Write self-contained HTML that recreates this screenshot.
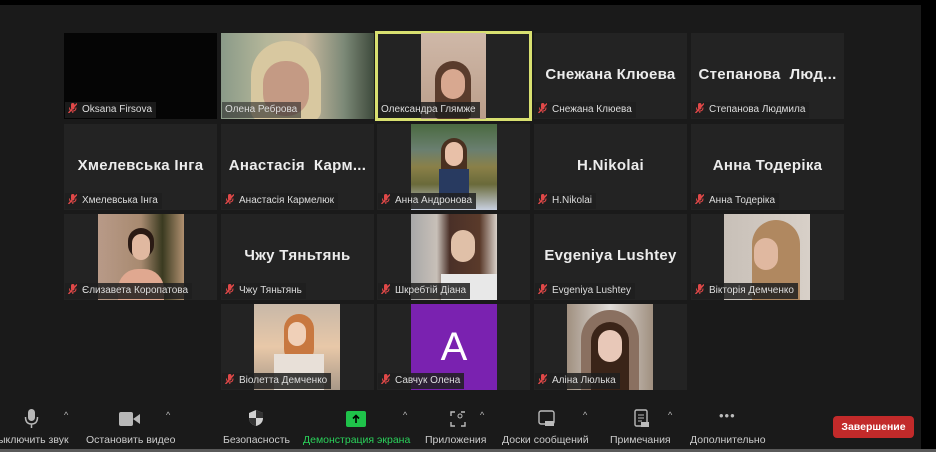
<!DOCTYPE html>
<html><head><meta charset="utf-8"><style>
*{margin:0;padding:0;box-sizing:border-box}
body{width:936px;height:452px;background:#000;overflow:hidden;position:relative;font-family:"Liberation Sans","DejaVu Sans",sans-serif}
#bg{position:absolute;left:0;top:5px;width:921px;height:445px;background:#1a1a1a}
#bl{position:absolute;left:0;top:449px;width:936px;height:3px;background:#5a5a5a}
.t{position:absolute;width:153px;height:86px;background:#232323;overflow:hidden}
.ph{position:absolute;top:0;height:86px}
.nm{position:absolute;left:0;right:0;top:33px;text-align:center;color:#ececec;font-weight:bold;font-size:15px;white-space:nowrap;letter-spacing:.3px}
.lb{position:absolute;left:1px;bottom:1px;height:16px;background:rgba(30,30,30,.85);color:#ddd;font-size:10px;line-height:16px;padding:0 4px 0 3px;white-space:nowrap}
.mu{display:inline-block;width:9px;height:10px;vertical-align:-1px;margin-right:5px}
.tb{position:absolute;color:#ccc;font-size:10.5px;top:434px;white-space:nowrap}
.ch{position:absolute;top:410px;color:#bbb;font-size:9px}
</style></head><body>
<div id="bg"></div><div id="bl"></div>
<svg width="0" height="0" style="position:absolute"><defs><g id="m"><rect x="3" y="0" width="3.5" height="6.5" rx="1.7" fill="#e04848"/><path d="M1.5 4.5 Q1.5 8 4.8 8 Q8 8 8 4.5 M4.8 8 V10" stroke="#e04848" fill="none" stroke-width="1"/><path d="M0.5 10 L9 0.5" stroke="#e04848" stroke-width="1.4"/></g></defs></svg>

<!-- Row 1 -->
<div class="t" style="left:64px;top:33px;background:#050505"><div class="lb"><svg class="mu"><use href="#m"/></svg>Oksana Firsova</div></div>
<div class="t" style="left:221px;top:33px;background:linear-gradient(90deg,#8a9a88 0%,#b5b79a 30%,#c9b99e 55%,#7d8a78 80%,#3e4a3c 100%)">
<div style="position:absolute;left:30px;top:8px;width:70px;height:80px;border-radius:35px 35px 10px 10px;background:#d8c8a0"></div>
<div style="position:absolute;left:42px;top:28px;width:46px;height:55px;border-radius:22px;background:#c49a84"></div>
<div class="lb" style="background:rgba(40,40,40,.6)">Олена Реброва</div></div>
<div class="t" style="left:377px;top:33px;height:86px;outline:3px solid #d8e070;outline-offset:-1px">
<div class="ph" style="left:44px;width:65px;background:linear-gradient(180deg,#cfb8a8,#bb9e8a)"><div style="position:absolute;left:14px;top:28px;width:36px;height:58px;border-radius:18px 18px 4px 4px;background:#5a3c2c"></div><div style="position:absolute;left:20px;top:36px;width:24px;height:30px;border-radius:12px;background:#d8a890"></div></div>
<div class="lb">Олександра Глямже</div></div>
<div class="t" style="left:534px;top:33px"><div class="nm">Снежана Клюева</div><div class="lb"><svg class="mu"><use href="#m"/></svg>Снежана Клюева</div></div>
<div class="t" style="left:691px;top:33px"><div class="nm">Степанова&nbsp; Люд...</div><div class="lb"><svg class="mu"><use href="#m"/></svg>Степанова Людмила</div></div>

<!-- Row 2 -->
<div class="t" style="left:64px;top:124px"><div class="nm">Хмелевська Інга</div><div class="lb"><svg class="mu"><use href="#m"/></svg>Хмелевська Інга</div></div>
<div class="t" style="left:221px;top:124px"><div class="nm">Анастасія&nbsp; Карм...</div><div class="lb"><svg class="mu"><use href="#m"/></svg>Анастасія Кармелюк</div></div>
<div class="t" style="left:377px;top:124px"><div class="ph" style="left:34px;width:86px;background:linear-gradient(180deg,#4a6a40 0%,#6a7f70 30%,#8a8048 50%,#6a6a3a 70%,#c8d0e0 100%)"><div style="position:absolute;left:30px;top:14px;width:26px;height:60px;border-radius:13px;background:#4a3020"></div><div style="position:absolute;left:34px;top:18px;width:18px;height:24px;border-radius:9px;background:#e8c0a8"></div><div style="position:absolute;left:28px;top:45px;width:30px;height:30px;background:#283a60"></div></div>
<div class="lb"><svg class="mu"><use href="#m"/></svg>Анна Андронова</div></div>
<div class="t" style="left:534px;top:124px"><div class="nm">H.Nikolai</div><div class="lb"><svg class="mu"><use href="#m"/></svg>H.Nikolai</div></div>
<div class="t" style="left:691px;top:124px"><div class="nm">Анна Тодеріка</div><div class="lb"><svg class="mu"><use href="#m"/></svg>Анна Тодеріка</div></div>

<!-- Row 3 -->
<div class="t" style="left:64px;top:214px"><div class="ph" style="left:34px;width:86px;background:linear-gradient(90deg,#b89a88 0%,#a88a70 50%,#3a3a20 75%,#b09070 100%)"><div style="position:absolute;left:30px;top:14px;width:26px;height:30px;border-radius:13px;background:#2a1a14"></div><div style="position:absolute;left:34px;top:20px;width:18px;height:26px;border-radius:9px;background:#e0b8a0"></div><div style="position:absolute;left:20px;top:55px;width:46px;height:32px;border-radius:20px 20px 0 0;background:#e0a890"></div></div>
<div class="lb"><svg class="mu"><use href="#m"/></svg>Єлизавета Коропатова</div></div>
<div class="t" style="left:221px;top:214px"><div class="nm">Чжу Тяньтянь</div><div class="lb"><svg class="mu"><use href="#m"/></svg>Чжу Тяньтянь</div></div>
<div class="t" style="left:377px;top:214px"><div class="ph" style="left:34px;width:86px;background:linear-gradient(90deg,#a8a8a8 0%,#c8c0b8 30%,#4a3028 45%,#5a3a2a 80%,#d8d0c8 100%)"><div style="position:absolute;left:40px;top:16px;width:24px;height:32px;border-radius:12px;background:#e0c0a8"></div><div style="position:absolute;left:30px;top:60px;width:56px;height:26px;background:#e8e8e8"></div></div>
<div class="lb"><svg class="mu"><use href="#m"/></svg>Шкребтій Діана</div></div>
<div class="t" style="left:534px;top:214px"><div class="nm">Evgeniya Lushtey</div><div class="lb"><svg class="mu"><use href="#m"/></svg>Evgeniya Lushtey</div></div>
<div class="t" style="left:691px;top:214px"><div class="ph" style="left:33px;width:86px;background:linear-gradient(90deg,#c8c0b8,#d8d0c8)"><div style="position:absolute;left:28px;top:6px;width:48px;height:80px;border-radius:24px 24px 0 0;background:#b08860"></div><div style="position:absolute;left:30px;top:24px;width:24px;height:32px;border-radius:12px;background:#e0b8a0"></div></div>
<div class="lb"><svg class="mu"><use href="#m"/></svg>Вікторія Демченко</div></div>

<!-- Row 4 -->
<div class="t" style="left:221px;top:304px"><div class="ph" style="left:33px;width:86px;background:linear-gradient(180deg,#c8b8a8 0%,#e8c8a8 50%,#a89888 100%)"><div style="position:absolute;left:30px;top:10px;width:30px;height:50px;border-radius:15px;background:#c87840"></div><div style="position:absolute;left:34px;top:18px;width:18px;height:24px;border-radius:9px;background:#f0d0b8"></div><div style="position:absolute;left:20px;top:50px;width:50px;height:36px;background:#e8e0d8"></div></div>
<div class="lb"><svg class="mu"><use href="#m"/></svg>Віолетта Демченко</div></div>
<div class="t" style="left:377px;top:304px"><div class="ph" style="left:34px;width:86px;background:#7a22b0;color:#fff;font-size:40px;text-align:center;line-height:86px">A</div>
<div class="lb"><svg class="mu"><use href="#m"/></svg>Савчук Олена</div></div>
<div class="t" style="left:534px;top:304px"><div class="ph" style="left:33px;width:86px;background:linear-gradient(90deg,#a09080,#e0dcd8,#a09080)"><div style="position:absolute;left:14px;top:6px;width:58px;height:80px;border-radius:29px 29px 0 0;background:#8a7060"></div><div style="position:absolute;left:24px;top:18px;width:38px;height:68px;border-radius:19px 19px 0 0;background:#3a2418"></div><div style="position:absolute;left:31px;top:26px;width:24px;height:32px;border-radius:12px;background:#e8c8b8"></div></div>
<div class="lb"><svg class="mu"><use href="#m"/></svg>Аліна Люлька</div></div>

<!-- Toolbar -->
<svg style="position:absolute;left:24px;top:409px" width="16" height="22"><rect x="4" y="0" width="7" height="12" rx="3.5" fill="#b8b8b8"/><path d="M1.5 8 Q1.5 15 7.5 15 Q13.5 15 13.5 8 M7.5 15 V19" stroke="#b8b8b8" stroke-width="1.5" fill="none"/></svg>
<div class="ch" style="left:64px">^</div>
<svg style="position:absolute;left:119px;top:412px" width="22" height="14"><rect x="0" y="0" width="14" height="14" rx="2" fill="#b8b8b8"/><path d="M14 7 L21 2 V12 Z" fill="#b8b8b8"/></svg>
<div class="ch" style="left:166px">^</div>
<svg style="position:absolute;left:248px;top:409px" width="16" height="18"><path d="M8 1 L15 4 V9 Q15 15 8 17 Q1 15 1 9 V4 Z" fill="#d0d0d0"/><path d="M8 1 V9 H15 V4 Z M1 9 H8 V17 Q1 15 1 9Z" fill="#333"/></svg>
<div style="position:absolute;left:346px;top:411px;width:20px;height:16px;background:#1fc24a;border-radius:2px"><svg width="20" height="16"><path d="M10 12 V5 M7 7.5 L10 4.5 L13 7.5" stroke="#000" stroke-width="1.6" fill="none"/></svg></div>
<div class="ch" style="left:403px">^</div>
<svg style="position:absolute;left:450px;top:411px" width="16" height="16"><path d="M1 5 V1 H5 M11 1 H15 M15 11 V15 H11 M1 11 V15 H5" stroke="#bbb" stroke-width="1.4" fill="none"/><circle cx="10" cy="5" r="2" stroke="#bbb" fill="none"/></svg>
<div class="ch" style="left:480px">^</div>
<svg style="position:absolute;left:538px;top:410px" width="18" height="18"><rect x="1" y="1" width="15" height="13" rx="2" stroke="#bbb" stroke-width="1.4" fill="none"/><rect x="7" y="11" width="9" height="5" fill="#bbb"/></svg>
<div class="ch" style="left:583px">^</div>
<svg style="position:absolute;left:634px;top:409px" width="16" height="20"><rect x="1" y="1" width="12" height="16" rx="1.5" stroke="#bbb" stroke-width="1.4" fill="none"/><path d="M4 6 H10 M4 9 H10 M4 12 H8" stroke="#bbb"/><rect x="7" y="13" width="8" height="5" fill="#bbb"/></svg>
<div class="ch" style="left:668px">^</div>
<div style="position:absolute;left:719px;top:408px;color:#bbb;font-size:13px;letter-spacing:1px">•••</div>

<div class="tb" style="left:-2px">ыключить звук</div>
<div class="tb" style="left:86px">Остановить видео</div>
<div class="tb" style="left:223px">Безопасность</div>
<div class="tb" style="left:303px;color:#2ad15a">Демонстрация экрана</div>
<div class="tb" style="left:425px">Приложения</div>
<div class="tb" style="left:502px">Доски сообщений</div>
<div class="tb" style="left:610px">Примечания</div>
<div class="tb" style="left:690px">Дополнительно</div>
<div style="position:absolute;left:833px;top:416px;width:81px;height:22px;background:#c22a2a;border-radius:4px;color:#fff;font-weight:bold;font-size:10.5px;text-align:center;line-height:22px">Завершение</div>
</body></html>
